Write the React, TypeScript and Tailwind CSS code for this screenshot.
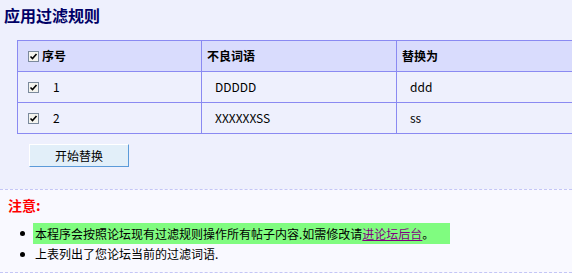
import React from "react";

const font = "font-['SimSun','Noto_Sans_CJK_SC',sans-serif]";

function Check() {
  return (
    <span className="inline-flex w-[11px] h-[11px] border border-[#7b8a9c] bg-[#f4f4ee] items-center justify-center shrink-0">
      <svg width="9" height="9" viewBox="0 0 9 9">
        <path d="M1.5 4.5 L3.5 6.5 L7.5 2" stroke="#000" strokeWidth="1.6" fill="none" />
      </svg>
    </span>
  );
}

const rows = [
  { id: "1", word: "DDDDD", rep: "ddd" },
  { id: "2", word: "XXXXXXSS", rep: "ss" },
];

export default function App() {
  return (
    <div className={`w-[572px] h-[273px] overflow-hidden bg-[#eef0fd] text-[12px] text-black ${font}`}>
      <div className="h-[40px] pl-[4px] pt-[5px]">
        <h1 className="text-[16px] font-bold text-[#000066] leading-[20px]">应用过滤规则</h1>
      </div>

      {/* rule table, runs off the right edge */}
      <div className="ml-[17px] w-[600px] border-t border-l border-[#8a8af2]">
        <div className="flex h-[31px] bg-[#d9dcfd] border-b border-[#8a8af2] font-bold">
          <div className="w-[184px] border-r border-[#8a8af2] flex items-center pl-[10px] gap-[3px]">
            <Check />
            <span>序号</span>
          </div>
          <div className="w-[195px] border-r border-[#8a8af2] flex items-center pl-[5px]">不良词语</div>
          <div className="flex-1 flex items-center pl-[5px]">替换为</div>
        </div>
        {rows.map((r) => (
          <div key={r.id} className="flex h-[31px] border-b border-[#8a8af2]">
            <div className="w-[184px] border-r border-[#8a8af2] flex items-center pl-[10px] gap-[14px]">
              <Check />
              <span>{r.id}</span>
            </div>
            <div className="w-[195px] border-r border-[#8a8af2] flex items-center pl-[13px]">{r.word}</div>
            <div className="flex-1 flex items-center pl-[13px]">{r.rep}</div>
          </div>
        ))}
      </div>

      <div className="h-[55px] pl-[29px] pt-[10px]">
        <button className="w-[100px] h-[23px] bg-[#e2eff9] border border-t-white border-l-white border-b-[#5b9bd9] border-r-[#5b9bd9] text-[12px] leading-none">
          开始替换
        </button>
      </div>

      {/* notes */}
      <div className="border-t border-b border-dashed border-[#c4c6f6] bg-[#f9f9ff] h-[84px] pt-[7px]">
        <div className="pl-[8px] text-[14px] font-bold text-[#ff0000] leading-[16px]">注意:</div>
        <ul className="mt-[10px]">
          <li className="flex items-center h-[21px]">
            <span className="ml-[20px] w-[5px] h-[5px] rounded-full bg-black shrink-0" />
            <span className="ml-[8px] h-[21px] leading-[21px] bg-[#80fc80] pl-[2px] pr-[16px] whitespace-nowrap">
              本程序会按照论坛现有过滤规则操作所有帖子内容.如需修改请
              <a className="text-[#800080] underline">进论坛后台</a>。
            </span>
          </li>
          <li className="flex items-center h-[20px]">
            <span className="ml-[20px] w-[5px] h-[5px] rounded-full bg-black shrink-0" />
            <span className="ml-[10px] whitespace-nowrap">上表列出了您论坛当前的过滤词语.</span>
          </li>
        </ul>
      </div>
    </div>
  );
}
